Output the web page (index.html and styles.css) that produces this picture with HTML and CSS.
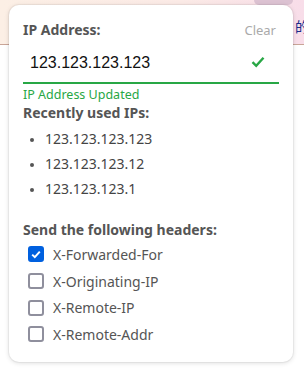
FILE: index.html
```html
<!DOCTYPE html>
<html>
<head>
<meta charset="utf-8">
<link rel="stylesheet" href="styles.css">
</head>
<body>
<div class="page">
  <div class="topbar">
    <div class="tab"></div>
    <span class="cjk">的</span>
  </div>
</div>
<div class="popup">
  <div class="head">
    <span class="title">IP Address:</span>
    <span class="clear">Clear</span>
  </div>
  <div class="field">
    <span class="value">123.123.123.123</span>
    <svg class="ok" width="14" height="12" viewBox="0 0 14 12"><path d="M1.5 6.2 L5.2 9.8 L12.5 1.8" fill="none" stroke="#28a745" stroke-width="2.4"/></svg>
  </div>
  <div class="status">IP Address Updated</div>
  <div class="title">Recently used IPs:</div>
  <ul class="recent">
    <li>123.123.123.123</li>
    <li>123.123.123.12</li>
    <li>123.123.123.1</li>
  </ul>
  <div class="title">Send the following headers:</div>
  <div class="checks">
    <label class="check"><span class="box on"><svg width="10" height="9" viewBox="0 0 10 9"><path d="M1.2 4.6 L3.8 7.1 L8.8 1.6" fill="none" stroke="#fff" stroke-width="2"/></svg></span>X-Forwarded-For</label>
    <label class="check"><span class="box"></span>X-Originating-IP</label>
    <label class="check"><span class="box"></span>X-Remote-IP</label>
    <label class="check"><span class="box"></span>X-Remote-Addr</label>
  </div>
</div>
</body>
</html>
```

FILE: styles.css
```css
html, body {
  margin: 0;
  padding: 0;
  background: #fff;
  width: 304px;
  height: 377px;
  overflow: hidden;
}
.page {
  width: 304px;
}
.topbar {
  height: 44px;
  border-bottom: 1px solid #c9a597;
  background: linear-gradient(90deg, #fcefe5 0%, #fbeae6 60%, #f8dde9 100%);
  display: flex;
  justify-content: flex-end;
  align-items: flex-start;
  position: relative;
}
.tab {
  position: absolute;
  left: 254px;
  top: 0;
  width: 39px;
  height: 5px;
  background: #dcc2d2;
  border-radius: 0 0 6px 6px;
}
.cjk {
  font-family: "Noto Sans CJK SC", sans-serif;
  font-size: 14px;
  color: #1a2a8a;
  margin-top: 17px;
  margin-right: -5px;
  line-height: 18px;
}
.popup {
  position: absolute;
  left: 9px;
  top: 5px;
  width: 284px;
  height: 357px;
  box-sizing: border-box;
  background: #fff;
  border-radius: 10px;
  box-shadow: 0 0 0 1px rgba(0,0,0,0.04), 0 1px 5px rgba(0,0,0,0.14);
  padding: 15px 14px 0 14px;
  font-family: "Noto Sans", sans-serif;
  color: #555;
}
.head {
  display: flex;
  justify-content: space-between;
  align-items: center;
  height: 19px;
}
.title {
  font-weight: bold;
  font-size: 14px;
  line-height: 19px;
  color: #555;
}
.clear {
  font-size: 13px;
  color: #aaa;
  margin-right: 3px;
}
.field {
  margin-top: 6px;
  height: 37px;
  border-bottom: 2px solid #28a745;
  display: flex;
  align-items: center;
  justify-content: space-between;
  padding: 0 14px 0 7px;
}
.value {
  font-family: "Liberation Sans", Arial, sans-serif;
  font-size: 16px;
  color: #111;
  margin-top: -2px;
}
.ok {
  margin-top: -4px;
}
.status {
  color: #28a745;
  font-size: 12.5px;
  line-height: 17px;
  margin-top: 2px;
}
.title + .recent {
  margin-top: 4px;
}
.recent {
  margin: 0;
  padding: 0 0 0 22px;
  font-size: 14px;
  color: #444;
}
.recent li {
  height: 25px;
  line-height: 25px;
}
.recent li::marker {
  font-size: 11px;
  color: #555;
}
.recent + .title {
  margin-top: 19px;
}
.checks {
  display: flex;
  flex-direction: column;
  margin-top: 2px;
}
.check {
  display: flex;
  align-items: center;
  height: 26.7px;
  font-size: 14px;
  color: #555;
  padding-left: 5px;
}
.box {
  width: 12px;
  height: 12px;
  border: 2px solid #8f8f9d;
  border-radius: 3px;
  margin-right: 9px;
  display: flex;
  align-items: center;
  justify-content: center;
  box-sizing: content-box;
}
.box.on {
  background: #0060df;
  border-color: #0060df;
}
```
